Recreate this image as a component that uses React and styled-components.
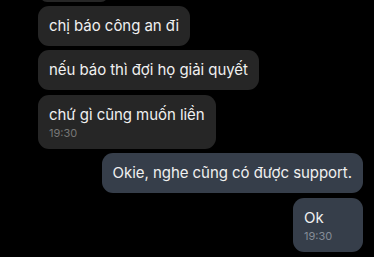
import styled, { createGlobalStyle } from "styled-components";

const Global = createGlobalStyle`
  html, body {
    margin: 0;
    padding: 0;
    background: #000;
  }
  body {
    font-family: Inter, "Noto Sans", "Liberation Sans", sans-serif;
    -webkit-font-smoothing: antialiased;
  }
`;

const Screen = styled.div`
  width: 374px;
  height: 257px;
  overflow: hidden;
  background: #000;
`;

const Thread = styled.div`
  display: flex;
  flex-direction: column;
  gap: 4px;
  padding: 0 11px 0 38px;
`;

const Bubble = styled.div`
  align-self: ${(p) => (p.$mine ? "flex-end" : "flex-start")};
  background: ${(p) => (p.$mine ? "#363e4a" : "#262626")};
  color: #f0f0f0;
  border-radius: 11px;
  padding: 9px 11px;
  min-width: ${(p) => p.$minWidth || 0}px;
  box-sizing: border-box;
  margin-top: ${(p) => p.$gapTop || 0}px;
`;

// bottom edge of the previous message, scrolled mostly out of view
const CutBubble = styled.div`
  align-self: flex-start;
  width: 68px;
  height: 14px;
  margin: -12px 0 0 2px;
  background: #262626;
  border-radius: 11px;
`;

const Text = styled.div`
  font-size: 15px;
  line-height: 22px;
  letter-spacing: -0.05px;
  white-space: nowrap;
`;

const Time = styled.div`
  font-size: 11px;
  line-height: 14px;
  color: ${(p) => (p.$mine ? "#858c97" : "#777")};
`;

const messages = [
  { text: "chị báo công an đi", mine: false },
  { text: "nếu báo thì đợi họ giải quyết", mine: false },
  { text: "chứ gì cũng muốn liền", mine: false, time: "19:30", gap: 1 },
  { text: "Okie, nghe cũng có được support.", mine: true },
  { text: "Ok", mine: true, time: "19:30", gap: 1, minWidth: 70 },
];

export default function App() {
  return (
    <Screen>
      <Global />
      <Thread>
        <CutBubble />
        {messages.map((m, i) => (
          <Bubble key={i} $mine={m.mine} $gapTop={m.gap} $minWidth={m.minWidth}>
            <Text>{m.text}</Text>
            {m.time && <Time $mine={m.mine}>{m.time}</Time>}
          </Bubble>
        ))}
      </Thread>
    </Screen>
  );
}
